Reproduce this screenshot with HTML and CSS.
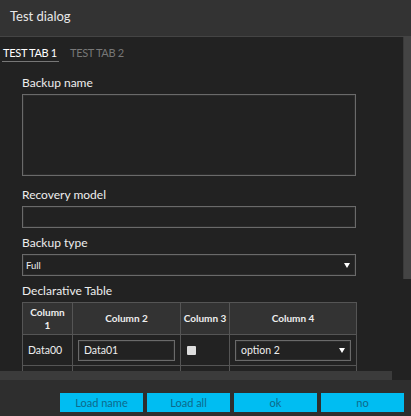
FILE: index.html
```html
<!DOCTYPE html>
<html lang="en">
  <head>
    <meta charset="UTF-8" />
    <title>Test dialog</title>
    <link rel="stylesheet" href="styles.css">
  </head>
  <body>
    <div class="dialog">
      <div class="dialog-header">Test dialog</div>

      <div class="dialog-body">
        <div class="dialog-content">
          <ul class="tabs">
            <li class="tab tab-active">TEST TAB 1</li>
            <li class="tab">TEST TAB 2</li>
          </ul>

          <div class="form">
            <label class="form-label">Backup name</label>
            <div class="field field-area"></div>

            <label class="form-label">Recovery model</label>
            <div class="field field-text"></div>

            <label class="form-label">Backup type</label>
            <div class="field field-select">
              <span class="select-text">Full</span>
              <svg class="caret" width="6" height="5" viewBox="0 0 6 5"><path d="M0 0H6L3 5Z" fill="#fff"/></svg>
            </div>

            <label class="form-label">Declarative Table</label>
            <table class="grid">
              <colgroup>
                <col class="col-1">
                <col class="col-2">
                <col class="col-3">
                <col class="col-4">
              </colgroup>
              <thead>
                <tr>
                  <th class="th-narrow">Column 1</th>
                  <th>Column 2</th>
                  <th>Column 3</th>
                  <th>Column 4</th>
                </tr>
              </thead>
              <tbody>
                <tr>
                  <td>Data00</td>
                  <td><div class="cell-input">Data01</div></td>
                  <td><span class="check"></span></td>
                  <td>
                    <div class="cell-input cell-select">
                      <span>option 2</span>
                      <svg class="caret" width="6" height="5" viewBox="0 0 6 5"><path d="M0 0H6L3 5Z" fill="#fff"/></svg>
                    </div>
                  </td>
                </tr>
                <!-- second row: only its top edge shows above the scrollbar -->
                <tr>
                  <td></td>
                  <td><div class="cell-input"></div></td>
                  <td></td>
                  <td><div class="cell-input"></div></td>
                </tr>
              </tbody>
            </table>
          </div>
        </div>
        <div class="vscroll"><div class="vscroll-thumb"></div></div>
      </div>

      <div class="hscroll"><div class="hscroll-thumb"></div></div>

      <div class="dialog-footer">
        <button type="button" class="btn">Load name</button>
        <button type="button" class="btn">Load all</button>
        <button type="button" class="btn">ok</button>
        <button type="button" class="btn">no</button>
      </div>
    </div>
  </body>
</html>
```

FILE: styles.css
```css
html, body {
  margin: 0;
  padding: 0;
}

body {
  background: #222;
  font-family: Lato, "Open Sans", sans-serif;
  color: #eee;
}

.dialog {
  width: 411px;
  height: 416px;
  display: flex;
  flex-direction: column;
  overflow: hidden;
}

.dialog-header {
  height: 37px;
  flex: none;
  background: #333;
  border-bottom: 1px solid #444;
  padding-left: 10px;
  font-size: 13px;
  line-height: 33px;
  color: #e8e8e8;
  box-sizing: border-box;
}

/* scroll area */
.dialog-body {
  height: 334px;
  flex: none;
  display: flex;
  background: #222;
}

.dialog-content {
  flex: 1;
  overflow: hidden;
}

.vscroll {
  width: 8px;
  flex: none;
}

.vscroll-thumb {
  height: 242px;
  background: #444;
  border-left: 1px solid #3a3a3a;
}

.hscroll {
  height: 9px;
  flex: none;
  background: #222;
}

.hscroll-thumb {
  width: 392px;
  height: 100%;
  background: #3b3b3b;
}

/* tabs */
.tabs {
  list-style: none;
  margin: 0;
  padding: 7px 0 0 2px;
  display: flex;
  gap: 10px;
}

.tab {
  font-size: 11px;
  letter-spacing: -0.3px;
  line-height: 17px;
  padding: 0 2px 0 1px;
  color: #777;
  border-bottom: 1px solid transparent;
}

.tab-active {
  color: #fff;
  border-bottom-color: #777;
}

/* form */
.form {
  width: 334px;
  margin-left: 22px;
  padding-top: 13px;
}

.form-label {
  display: block;
  font-size: 12px;
  line-height: 16px;
  margin-bottom: 3px;
}

.field {
  border: 1px solid #6a6a6a;
  box-shadow: inset 0 0 0 1px #2c2c2c;
  box-sizing: border-box;
}

.field-area {
  height: 82px;
  margin-bottom: 11px;
}

.field-text {
  height: 22px;
  margin-bottom: 7px;
}

.field-select {
  height: 22px;
  display: flex;
  align-items: center;
  justify-content: space-between;
  padding: 0 5px 0 3px;
  margin-bottom: 7px;
}

.select-text {
  font-size: 9.5px;
}

/* table */
.grid {
  width: 334px;
  table-layout: fixed;
  border-collapse: collapse;
  font-size: 10.5px;
}

.col-1 { width: 50px; }
.col-2 { width: 108px; }
.col-3 { width: 49px; }
.col-4 { width: 127px; }

.grid th,
.grid td {
  border: 1px solid #555;
  padding: 0 5px;
}

.grid th {
  background: #333;
  font-size: 10px;
  font-weight: bold;
  height: 31px;
  line-height: 13px;
  text-align: center;
  padding: 0 1px;
}

.grid .th-narrow {
  padding: 0 6px;
}

.grid td {
  height: 30px;
}

.cell-input {
  height: 21px;
  border: 1px solid #6a6a6a;
  box-shadow: inset 0 0 0 1px #2c2c2c;
  box-sizing: border-box;
  padding: 0 5px;
  line-height: 19px;
}

.cell-select {
  display: flex;
  align-items: center;
  justify-content: space-between;
}

.check {
  display: block;
  width: 9px;
  height: 9px;
  margin-left: 1px;
  background: #ddd;
  border-radius: 1px;
}

/* footer */
.dialog-footer {
  flex: 1;
  background: #2e2e2e;
  display: flex;
  justify-content: flex-end;
  align-items: flex-start;
  gap: 4px;
  padding: 13px 7px 0 0;
}

.btn {
  width: 83px;
  height: 19px;
  border: 0;
  background: #00bdf2;
  color: #0d6a8c;
  font-family: Lato, "Open Sans", sans-serif;
  font-size: 11px;
  line-height: 19px;
  padding: 0;
}
```
